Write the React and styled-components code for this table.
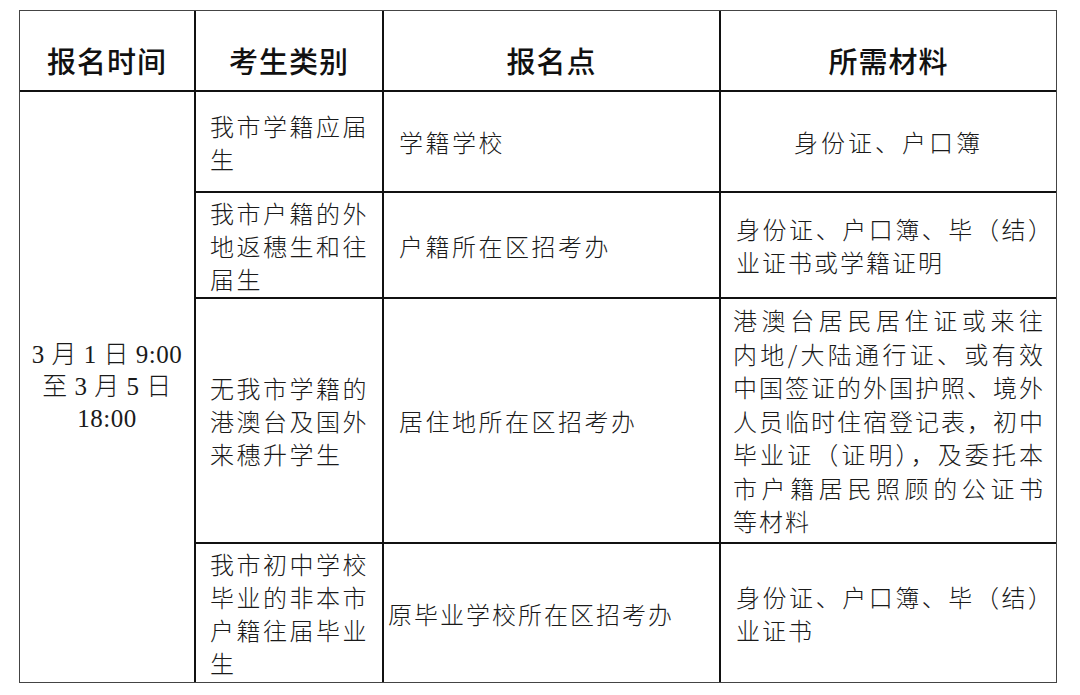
import React from 'react';
import styled, { createGlobalStyle } from 'styled-components';

const GlobalStyle = createGlobalStyle`
  html, body {
    margin: 0;
    padding: 0;
    background: #ffffff;
  }
`;

const Page = styled.div`
  width: 1080px;
  height: 695px;
  padding: 10px 0 0 19px;
  box-sizing: border-box;
  background: #fff;
`;

const Table = styled.div`
  display: grid;
  grid-template-columns: 174px 186px 335px 335px;
  grid-template-rows: 79px 99px 104px 243px 138px;
  gap: 2px;
  width: max-content;
  background: #111;
  border: 1px solid #444;
`;

const HeadCell = styled.div`
  display: flex;
  align-items: center;
  justify-content: center;
  padding-top: 18px;
  box-sizing: border-box;
  background: #fff;
  color: #111;
  font-family: "Noto Sans CJK SC", sans-serif;
  font-size: 29px;
  font-weight: 500;
  letter-spacing: 1px;
`;

const TimeCell = styled.div`
  grid-row: 2 / span 4;
  display: flex;
  flex-direction: column;
  align-items: center;
  justify-content: center;
  background: #fff;
  color: #1a1a1a;
  font-family: "Liberation Serif", "Noto Sans CJK SC", serif;
  font-size: 25px;
  font-weight: 300;
  line-height: 32px;
  letter-spacing: 0.5px;
`;

const Cell = styled.div`
  display: flex;
  flex-direction: column;
  justify-content: center;
  padding: ${p => p.$pad || '0 12px 0 14px'};
  box-sizing: border-box;
  background: #fff;
  color: #1a1a1a;
  text-align: ${p => p.$align || 'left'};
  font-family: "Noto Sans CJK SC", sans-serif;
  font-size: 24px;
  font-weight: 300;
  line-height: ${p => p.$lh || '33px'};
  letter-spacing: ${p => p.$ls || '2.5px'};
  white-space: nowrap;
`;

const Line = styled.div`
  white-space: ${p => (p.$justify ? 'normal' : 'nowrap')};
  letter-spacing: ${p => (p.$justify ? '0' : 'inherit')};
  text-align: ${p => (p.$justify ? 'justify' : 'inherit')};
  text-align-last: ${p => (p.$justify ? 'justify' : 'auto')};
`;

const headers = ['报名时间', '考生类别', '报名点', '所需材料'];

const rows = [
  {
    type: ['我市学籍应届', '生'],
    place: '学籍学校',
    docs: { center: true, lines: [['身份证、户口簿']] },
  },
  {
    type: ['我市户籍的外', '地返穗生和往', '届生'],
    place: '户籍所在区招考办',
    docs: {
      pad: '0 4px 0 15px',
      lines: [['身份证、户口簿、毕（结）', true], ['业证书或学籍证明']],
    },
  },
  {
    type: ['无我市学籍的', '港澳台及国外', '来穗升学生'],
    place: '居住地所在区招考办',
    docs: {
      lh: '33.5px',
      pad: '0 13px 0 12px',
      lines: [
        ['港澳台居民居住证或来往', true],
        ['内地/大陆通行证、或有效', true],
        ['中国签证的外国护照、境外', true],
        ['人员临时住宿登记表，初中', true],
        ['毕业证（证明），及委托本', true],
        ['市户籍居民照顾的公证书', true],
        ['等材料'],
      ],
    },
  },
  {
    type: ['我市初中学校', '毕业的非本市', '户籍往届毕业', '生'],
    place: '原毕业学校所在区招考办',
    placePad: '0 6px 0 4px',
    placeLs: '2px',
    docs: {
      pad: '0 4px 0 15px',
      lines: [['身份证、户口簿、毕（结）', true], ['业证书']],
    },
  },
];

export default function App() {
  return (
    <>
      <GlobalStyle />
      <Page>
        <Table>
          {headers.map(h => (
            <HeadCell key={h}>{h}</HeadCell>
          ))}
          <TimeCell>
            <div>3 月 1 日 9:00</div>
            <div>至 3 月 5 日</div>
            <div>18:00</div>
          </TimeCell>
          {rows.map((r, i) => (
            <React.Fragment key={i}>
              <Cell style={{ gridColumn: 2, gridRow: i + 2 }}>
                {r.type.map(t => (
                  <Line key={t}>{t}</Line>
                ))}
              </Cell>
              <Cell
                style={{ gridColumn: 3, gridRow: i + 2 }}
                $pad={r.placePad || '0 12px 0 15px'}
                $ls={r.placeLs}
              >
                <Line>{r.place}</Line>
              </Cell>
              <Cell
                style={{ gridColumn: 4, gridRow: i + 2 }}
                $align={r.docs.center ? 'center' : 'left'}
                $pad={r.docs.pad || (r.docs.center ? '0 8px' : '0 13px 0 15px')}
                $lh={r.docs.lh}
                $ls={r.docs.center ? '3px' : '2px'}
              >
                {r.docs.lines.map(([text, justify]) => (
                  <Line key={text} $justify={justify}>
                    {text}
                  </Line>
                ))}
              </Cell>
            </React.Fragment>
          ))}
        </Table>
      </Page>
    </>
  );
}
